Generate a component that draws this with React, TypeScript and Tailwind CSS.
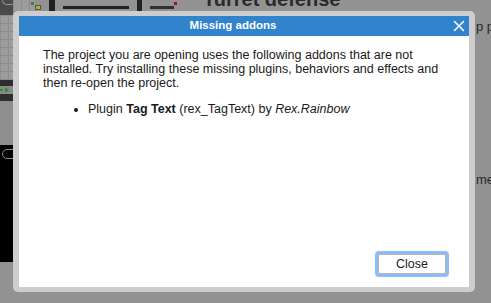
import { X } from 'lucide-react';

const addons = [{ kind: 'Plugin', name: 'Tag Text', id: 'rex_TagText', author: 'Rex.Rainbow' }];

const Backdrop = () => (
  <div className="absolute inset-0 bg-[#929292] overflow-hidden">
    {/* left panel of the editor behind the overlay */}
    <div className="absolute left-0 top-0 w-[13px] h-full flex flex-col">
      <div className="h-[15px] bg-[#4a4a4a]" />
      <div className="h-[65px] bg-[#9c9c9c] bg-[linear-gradient(#8c8c8c_1px,transparent_1px),linear-gradient(90deg,#8c8c8c_1px,transparent_1px)] bg-[size:8px_8px]" />
      <div className="h-[6px] bg-[#2e2e2e]" />
      <div className="h-[8px] bg-[#8a8a8a] flex items-center gap-[2px]">
        <div className="w-[3px] h-[2px] bg-[#2f8a2f]" />
        <div className="w-0 h-0 border-y-[3px] border-y-transparent border-l-[4px] border-l-[#2f8a2f]" />
      </div>
      <div className="h-[7px] bg-[#2e2e2e]" />
      <div className="h-[44px] bg-[#8e8e8e]" />
      <div className="h-[117px] bg-black pt-[4px] pl-[2px]">
        <div className="w-[14px] h-[10px] rounded-l-full border border-[#8a8a8a]" />
      </div>
    </div>
    <div className="absolute left-[2px] top-[-4px] w-[14px] h-[9px] rounded-full border border-[#9a9a9a]" />
    {/* top strip */}
    <div className="absolute left-[13px] top-0 h-[11px] flex items-start">
      <div className="relative w-[22px] h-[11px] bg-[#9c9c9c] bg-[linear-gradient(90deg,#8c8c8c_1px,transparent_1px)] bg-[size:8px_8px]">
        <div className="absolute left-[18px] top-[2px] w-[3px] h-[3px] bg-[#2f8a2f]" />
      </div>
      <div className="w-[6px] h-[5px] mt-[5px] bg-[#b8b020] border border-[#555]" />
      <div className="w-[6px] h-[11px] ml-[8px] bg-[#222]" />
      <div className="w-[66px] h-[3px] mt-[6px] ml-[8px] bg-[#222]" />
      <div className="w-[5px] h-[11px] ml-[8px] bg-[#222]" />
      <div className="w-[24px] h-[3px] mt-[6px] ml-[8px] bg-[#333]" />
      <div className="w-[3px] h-[3px] mt-[2px] bg-[#b01010]" />
      <div className="ml-[26px] mt-[-16px] text-[20px] font-bold text-[#2a2a2a] whitespace-nowrap">Turret defense</div>
    </div>
    <div className="absolute left-[476px] top-[17px] text-[13px] text-[#2a2a2a] whitespace-nowrap">p p</div>
    <div className="absolute left-[476px] top-[170px] text-[13px] text-[#2a2a2a] whitespace-nowrap">me</div>
  </div>
);

const App = () => {
  return (
    <div className="relative w-[491px] h-[303px] overflow-hidden font-['Liberation_Sans',Arial,sans-serif]">
      <Backdrop />
      <div className="absolute left-[13px] top-[11px] w-[462px] h-[281px] rounded-[5px] bg-[#cdcdcd] px-[6px] py-[5px] flex flex-col">
        <div className="relative h-[20px] bg-[#3183cb] flex items-center justify-center pr-[22px]">
          <span className="text-white text-[11.5px] font-bold">Missing addons</span>
          <X className="absolute right-[1px] top-[1px] text-white" size={18} strokeWidth={2} />
        </div>
        <div className="flex-1 bg-white flex flex-col px-[24px] pt-[12px] pb-[10px] text-[12.5px] leading-[14px] text-[#1a1a1a]">
          <p>
            The project you are opening uses the following addons that are not installed. Try installing these
            missing plugins, behaviors and effects and then re-open the project.
          </p>
          <ul className="list-disc pl-[45px] mt-[12px]">
            {addons.map((a) => (
              <li key={a.id}>
                {a.kind} <b>{a.name}</b> ({a.id}) by <i>{a.author}</i>
              </li>
            ))}
          </ul>
          <div className="mt-auto flex justify-end mr-[-4px]">
            <div className="rounded-[4px] bg-[#8dbdf6] p-[3px]">
              <button className="w-[68px] h-[20px] bg-white border border-[#b4b4b4] rounded-[2px] text-[12.5px] text-[#1a1a1a] leading-none">
                Close
              </button>
            </div>
          </div>
        </div>
      </div>
    </div>
  );
};

export default App;
